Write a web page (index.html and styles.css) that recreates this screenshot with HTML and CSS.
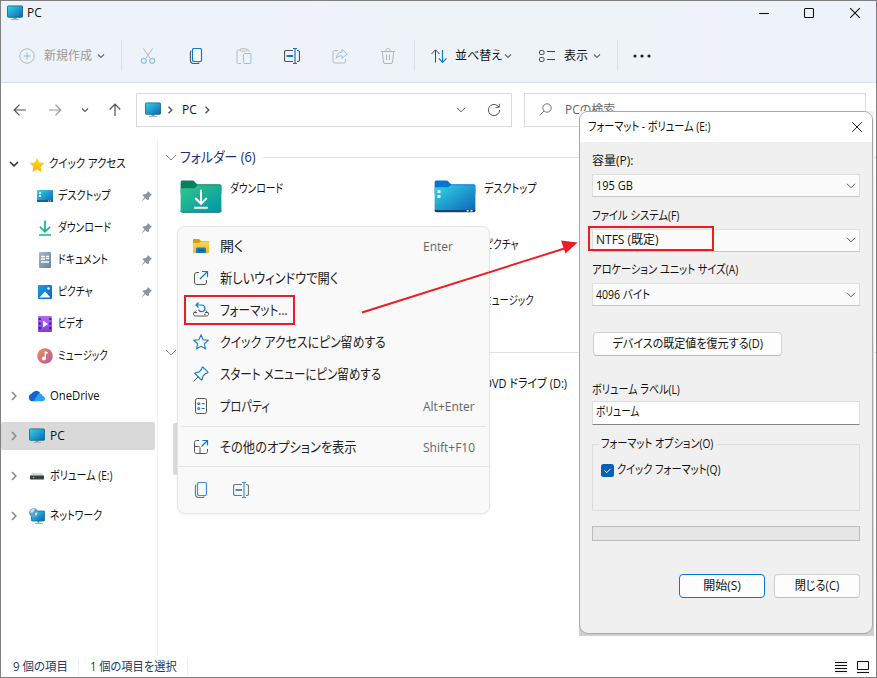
FILE: index.html
```html
<!DOCTYPE html>
<html lang="ja">
<head>
  <meta charset="UTF-8" />
  <meta name="viewport" content="width=device-width, initial-scale=1.0" />
  <title>PC</title>
  <link rel="stylesheet" href="styles.css">
</head>
<body>
  <!-- Shared icons -->
  <svg class="defs" width="0" height="0">
    <defs>
      <linearGradient id="g-screen" x1="0" y1="0" x2="1" y2="1"><stop offset="0" stop-color="#35d5e6"/><stop offset="1" stop-color="#0b62b8"/></linearGradient>
      <linearGradient id="g-green" x1="0" y1="0" x2="1" y2="1"><stop offset="0" stop-color="#33c787"/><stop offset="1" stop-color="#0095ab"/></linearGradient>
      <linearGradient id="g-doc" x1="0" y1="0" x2="1" y2="1"><stop offset="0" stop-color="#a5b8ce"/><stop offset="1" stop-color="#67809e"/></linearGradient>
      <linearGradient id="g-pic" x1="0" y1="0" x2="1" y2="1"><stop offset="0" stop-color="#18a2e8"/><stop offset="1" stop-color="#0a62bd"/></linearGradient>
      <linearGradient id="g-video" x1="0" y1="0" x2="0" y2="1"><stop offset="0" stop-color="#b36cf0"/><stop offset="1" stop-color="#7b3ddc"/></linearGradient>
      <linearGradient id="g-music" x1="0" y1="0" x2="1" y2="1"><stop offset="0" stop-color="#f29158"/><stop offset="1" stop-color="#b0579c"/></linearGradient>
      <linearGradient id="g-star" x1="0" y1="0" x2="0" y2="1"><stop offset="0" stop-color="#ffdc1f"/><stop offset="1" stop-color="#fbb400"/></linearGradient>
      <linearGradient id="g-folder" x1="0" y1="0" x2="0" y2="1"><stop offset="0" stop-color="#ffd85c"/><stop offset="1" stop-color="#f7b61c"/></linearGradient>
    </defs>
    <symbol id="pc" viewBox="0 0 16 16">
      <path d="M6.5 12h3v2.5h-3z" fill="#8d99a5"/>
      <path d="M4 14.5h8" stroke="#a9b3bc" stroke-width="1"/>
      <rect x=".5" y=".9" width="15" height="11.4" rx=".8" fill="url(#g-screen)" stroke="#14718f" stroke-width=".9"/>
    </symbol>
    <symbol id="down" viewBox="0 0 10 10"><path d="M2 3.5l3 3 3-3" fill="none" stroke="currentColor" stroke-width="1.1"/></symbol>
    <symbol id="copy" viewBox="0 0 16 16">
      <path d="M3.2 3C2.5 3.4 2.4 4 2.4 4.6v7.2c0 2 1 3.700 3 3.700h4.200c.8 0 1.300-.3 1.700-.8" fill="none" stroke="#555" stroke-width="1.1"/>
      <rect x="4.5" y=".5" width="9" height="13" rx="1.6" fill="#f8fbff" stroke="#0f78d0" stroke-width="1.2"/>
    </symbol>
    <symbol id="rename" viewBox="0 0 16 16">
      <path d="M9 2.5H2.3C1.200 2.500.5 3.300.5 4.300v7.400c0 1 .7 1.800 1.800 1.800H9M13 2.500h.8c1 0 1.700.8 1.700 1.800v7.400c0 1-.7 1.800-1.700 1.800H13" fill="none" stroke="#555" stroke-width="1.2"/>
      <path d="M11 .5v15M9 .5h4M9 15.500h4" fill="none" stroke="#0f78d0" stroke-width="1.2"/>
      <path d="M2.500 8H9" stroke="#0f78d0" stroke-width="2"/>
    </symbol>
    <symbol id="pin" viewBox="0 0 12 12">
      <path d="M7 1l4 4-1.200.6-1.700 1.800-.3 2.300-1.200.6-2.300-2.100L1.200 11l-.4-.3 2.600-3.200L1.700 5.300l.8-1L5 4l1.500-1.700z" fill="#8a97a3"/>
    </symbol>
  </svg>

  <div class="window">
    <header class="header">
      <div class="titlebar">
        <svg class="i16"><use href="#pc"/></svg>
        <span class="title">PC</span>
        <div class="controls">
          <svg width="12" height="12" viewBox="0 0 12 12"><path d="M1 6.5h10"/></svg>
          <svg width="12" height="12" viewBox="0 0 12 12"><rect x="1.5" y="1.5" width="9" height="9" rx="1"/></svg>
          <svg width="12" height="12" viewBox="0 0 12 12"><path d="M1.2 1.2l9.6 9.6M10.8 1.2L1.2 10.8"/></svg>
        </div>
      </div>

      <div class="toolbar">
        <div class="tool new off">
          <svg class="i16" viewBox="0 0 16 16"><circle cx="8" cy="8" r="7.2" fill="none" stroke="#b4b9be"/><path d="M8 4.5v7M4.5 8h7" stroke="#8abde6"/></svg>
          <span>新規作成</span>
          <svg class="i10"><use href="#down"/></svg>
        </div>
        <i class="bar"></i>
        <div class="tool-icons">
          <svg class="i16" viewBox="0 0 16 16" fill="none"><path d="M3.300.5l7.200 10.300M12.700.5L5.500 10.800" stroke="#b4b9be"/><circle cx="3.800" cy="12.800" r="2.500" stroke="#8fc3ec" stroke-width="1.200"/><circle cx="12.200" cy="12.800" r="2.500" stroke="#8fc3ec" stroke-width="1.200"/></svg>
          <svg class="i16"><use href="#copy"/></svg>
          <svg class="i16" viewBox="0 0 16 16" fill="none"><path d="M5 15.500H2.300c-1 0-1.300-.5-1.300-1.300V3.300C1 2.400 1.500 2 2.300 2H4m7 0h1c.9 0 1.300.5 1.300 1.300V4" stroke="#b4b9be"/><rect x="4.300" y=".7" width="6.400" height="2.400" rx="1" stroke="#b4b9be"/><rect x="7.500" y="5.500" width="7.500" height="10" rx="1" stroke="#8fc3ec"/></svg>
          <svg class="i16"><use href="#rename"/></svg>
          <svg class="i16" viewBox="0 0 16 16" fill="none"><path d="M6 2.500H3C1.800 2.500 1 3.300 1 4.500V13c0 1.200.8 2 2 2h8.500c1.200 0 2-.8 2-2v-2" stroke="#b4b9be"/><path d="M10 1.500L15.300 6 10 10.400V7.800c-2.700-.1-4.500.8-5.600 2.400C4.600 6.500 6.600 4.300 10 4z" stroke="#8fc3ec"/></svg>
          <svg class="i16" viewBox="0 0 16 16" fill="none" stroke="#b0b5ba"><path d="M1 3.500h14M5.700 3.300c0-3.700 4.600-3.700 4.600 0M2.300 3.500l1.200 10.600c.1.900.6 1.400 1.500 1.400h6c.9 0 1.400-.5 1.500-1.400l1.200-10.600M6.500 6.500v5.500M9.500 6.500v5.500"/></svg>
        </div>
        <i class="bar"></i>
        <div class="tool sort">
          <svg class="i16" viewBox="0 0 16 16" fill="none"><path d="M4.500 14.500V2M.5 6l4-4.200 4 4.200" stroke="#444"/><path d="M11.500 2v12.200M7.800 10.300l3.700 4 4-4" stroke="#0f78d0" stroke-width="1.200"/></svg>
          <span>並べ替え</span>
          <svg class="i10"><use href="#down"/></svg>
        </div>
        <div class="tool view">
          <svg class="i16" viewBox="0 0 16 16" fill="none" stroke="#444"><rect x=".5" y="2.500" width="4.500" height="4" rx="1.300"/><rect x=".5" y="9.500" width="4.500" height="4" rx="1.300"/><path d="M8 3.500h8M8 11.500h8"/></svg>
          <span>表示</span>
          <svg class="i10"><use href="#down"/></svg>
        </div>
        <i class="bar"></i>
        <svg class="more" width="18" height="4" viewBox="0 0 18 4" fill="#222"><circle cx="2" cy="2" r="1.600"/><circle cx="9" cy="2" r="1.600"/><circle cx="16" cy="2" r="1.600"/></svg>
      </div>
    </header>

    <div class="nav">
      <div class="arrows">
        <svg width="14" height="14" viewBox="0 0 14 14"><path d="M13 7H1.200M6.500 1.700L1.200 7l5.300 5.300"/></svg>
        <svg class="dim" width="14" height="14" viewBox="0 0 14 14"><path d="M1 7h11.800M7.500 1.700L12.800 7l-5.300 5.300"/></svg>
        <svg class="small" width="10" height="10"><use href="#down"/></svg>
        <svg width="14" height="14" viewBox="0 0 14 14"><path d="M7 13V1.200M1.700 6.500L7 1.200l5.300 5.300"/></svg>
      </div>
      <div class="address">
        <svg class="i16"><use href="#pc"/></svg>
        <svg class="crumb" width="6" height="8" viewBox="0 0 6 8"><path d="M1.500.8L4.800 4 1.500 7.200"/></svg>
        <span>PC</span>
        <svg class="crumb" width="6" height="8" viewBox="0 0 6 8"><path d="M1.500.8L4.800 4 1.500 7.200"/></svg>
        <svg class="drop" width="10" height="6" viewBox="0 0 10 6"><path d="M1 .8l4 4 4-4"/></svg>
        <svg class="reload" width="14" height="14" viewBox="0 0 14 14"><path d="M12.600 7A5.600 5.600 0 1 1 10.800 2.900L12 4M12.300.8v3.500H8.700"/></svg>
      </div>
      <div class="search">
        <svg width="13" height="13" viewBox="0 0 13 13"><circle cx="8" cy="5" r="4.200"/><path d="M5 8l-4.300 4.300"/></svg>
        <span>PCの検索</span>
      </div>
    </div>

    <div class="main">
      <nav class="sidebar">
        <div class="row top">
          <svg class="chev open" width="10" height="6" viewBox="0 0 10 6"><path d="M1 1l4 3.800L9 1"/></svg>
          <svg class="i16" viewBox="0 0 16 16"><path d="M8 .7l2.200 4.800 5.300.6-3.900 3.600 1 5.300L8 12.400 3.400 15l1-5.300L.5 6.100l5.300-.6z" fill="url(#g-star)"/></svg>
          <span class="s-quick">クイック アクセス</span>
        </div>
        <div class="row sub">
          <svg class="i16" viewBox="0 0 16 16"><rect y="2" width="16" height="12" rx=".8" fill="url(#g-screen)"/><path d="M2 5h2M2 8h2" stroke="#fff" stroke-width="1.500"/><path d="M0 13h16" stroke="#0d5686" stroke-width="1.500"/><path d="M11 13h3" stroke="#fff" stroke-dasharray="1 1"/></svg>
          <span class="s-desktop">デスクトップ</span>
          <svg class="pin"><use href="#pin"/></svg>
        </div>
        <div class="row sub">
          <svg class="i16" viewBox="0 0 16 16" fill="none" stroke="#15b48c" stroke-width="1.700"><path d="M8 .5v11M3 6.800l5 5 5-5M2 15h12"/></svg>
          <span class="s-download">ダウンロード</span>
          <svg class="pin"><use href="#pin"/></svg>
        </div>
        <div class="row sub">
          <svg class="i16" viewBox="0 0 16 16"><rect x="2" y="0" width="12" height="16" rx="1" fill="url(#g-doc)"/><path d="M4 4.500h4M4 7h4M9 4.500h3M9 6.500h3M4 10h8" stroke="#fff" stroke-width="1.300"/></svg>
          <span class="s-document">ドキュメント</span>
          <svg class="pin"><use href="#pin"/></svg>
        </div>
        <div class="row sub">
          <svg class="i16" viewBox="0 0 16 16"><rect x="1" y="1" width="14" height="14" rx="1" fill="url(#g-pic)"/><path d="M2.500 13.500L8 7.500l5.500 6z" fill="#fff"/><circle cx="11.500" cy="4.500" r="1.200" fill="#fff"/></svg>
          <span class="s-picture">ピクチャ</span>
          <svg class="pin"><use href="#pin"/></svg>
        </div>
        <div class="row sub">
          <svg class="i16" viewBox="0 0 16 16"><rect x="1" width="14" height="16" rx="1" fill="url(#g-video)"/><path d="M2.800 2v12M13.200 2v12" stroke="#3c1a80" stroke-width="1.800" stroke-dasharray="2 2.500"/><path d="M6 4.500l5 3.500-5 3.500z" fill="#fff"/></svg>
          <span class="s-video">ビデオ</span>
        </div>
        <div class="row sub">
          <svg class="i16" viewBox="0 0 16 16"><circle cx="8" cy="8" r="7.800" fill="url(#g-music)"/><path d="M8.300 10.500V3.500c.4 1.200 1.700 1.500 2.500 1.500" fill="none" stroke="#fff" stroke-width="1.400"/><circle cx="6.900" cy="10.600" r="2" fill="#fff"/></svg>
          <span class="s-music">ミュージック</span>
        </div>
        <div class="row group first">
          <svg class="chev" width="6" height="10" viewBox="0 0 6 10"><path d="M1 1l3.800 4L1 9"/></svg>
          <svg class="i16" viewBox="0 0 16 16"><path d="M4 13.200A3.800 3.800 0 0 1 2.500 5.800 5.200 5.200 0 0 1 11 4.500l-4 8.700z" fill="#1464cf"/><path d="M4.500 13.300l4.200-6.500c1.300-1.900 4.500-1.500 4.800 1 3.400.8 3.200 5.500-.4 5.500z" fill="#28a4f2"/></svg>
          <span class="s-one">OneDrive</span>
        </div>
        <div class="row group">
          <div class="selected">
            <svg class="chev" width="6" height="10" viewBox="0 0 6 10"><path d="M1 1l3.800 4L1 9"/></svg>
            <svg class="i16"><use href="#pc"/></svg>
            <span>PC</span>
          </div>
        </div>
        <div class="row group">
          <svg class="chev" width="6" height="10" viewBox="0 0 6 10"><path d="M1 1l3.800 4L1 9"/></svg>
          <svg class="i16" viewBox="0 0 16 16"><path d="M3 5h10l2 3H1z" fill="#d5d8db"/><rect x="1" y="7.500" width="14" height="4" rx=".6" fill="#3c3f42"/><circle cx="4.500" cy="9.500" r=".8" fill="#4be070"/></svg>
          <span class="s-volume">ボリューム (E:)</span>
        </div>
        <div class="row group">
          <svg class="chev" width="6" height="10" viewBox="0 0 6 10"><path d="M1 1l3.800 4L1 9"/></svg>
          <svg class="i16" viewBox="0 0 16 16"><path d="M8.500 12h2v3h-2z" fill="#8d99a5"/><path d="M6 15.500h8" stroke="#a9b3bc"/><rect x="2.500" y="3" width="13" height="10" rx=".6" fill="url(#g-screen)" stroke="#14718f" stroke-width=".8"/><circle cx="4.600" cy="4.800" r="4.500" fill="#5d9fc7"/><path d="M1.500 2.500c1.500-1.500 3-1.700 4.500-1.200L4 4.500 1.500 5zM6 5l2.500-.5c0 1.500-.7 2.800-2 3.500z" fill="#cfe3ee"/></svg>
          <span class="s-network">ネットワーク</span>
        </div>
      </nav>

      <section class="content">
        <div class="heading">
          <svg width="12" height="7" viewBox="0 0 12 7"><path d="M1 1l5 5 5-5"/></svg>
          <span>フォルダー (6)</span>
          <i></i>
        </div>
        <div class="folders">
          <div class="folder">
            <svg width="42" height="33" viewBox="0 0 42 34"><path d="M0 8V2.500C0 1 .8.500 2 .500h11l4 4h23c1.500 0 2 .8 2 2V14H0z" fill="#0a7f60"/><path d="M0 8.500h14.500L17.500 5.500H42v25.500c0 1.500-.8 2-2 2H2c-1.200 0-2-.7-2-2z" fill="url(#g-green)"/><path d="M0 31.500c0 1.200 1 1.800 2 1.800h38c1 0 2-.6 2-1.800" fill="none" stroke="#087070"/><path d="M21 10v14M15 18.500l6 6 6-6M14 28.500h14" fill="none" stroke="#fff" stroke-width="2"/></svg>
            <span class="s-download">ダウンロード</span>
          </div>
          <div class="folder">
            <svg width="42" height="33" viewBox="0 0 42 34"><path d="M0 8V2.500C0 1 .8.500 2 .500h11l4 4h23c1.500 0 2 .8 2 2V14H0z" fill="#0874cf"/><path d="M0 7.500h13.500L17 5.500H42V31c0 1.500-.8 2-2 2H2c-1.200 0-2-.7-2-2z" fill="url(#g-screen)"/><path d="M0 31h42c0 1.500-.8 2.300-2 2.300H2C.8 33.300 0 32.500 0 31z" fill="#124666"/><path d="M3 10.500h3v3H3zM3 15.500h3v3H3zM33 31h2v1.500h-2zM37 31h2v1.500h-2z" fill="#fff"/></svg>
            <span class="s-desktop">デスクトップ</span>
          </div>
          <div class="folder"></div>
          <div class="folder plain"><span class="s-picture">ピクチャ</span></div>
          <div class="folder"></div>
          <div class="folder plain"><span class="s-music">ミュージック</span></div>
        </div>
        <div class="heading drives">
          <svg width="12" height="7" viewBox="0 0 12 7"><path d="M1 1l5 5 5-5"/></svg>
          <i></i>
        </div>
        <div class="dvd"><span class="s-dvd">DVD ドライブ (D:)</span></div>
        <div class="tile"></div>
      </section>
    </div>

    <footer class="status">
      <div class="count"><span class="s-count">9 個の項目</span></div>
      <div class="picked"><span class="s-select">1 個の項目を選択</span></div>
      <div class="modes">
        <svg width="14" height="14" viewBox="0 0 14 14"><path d="M1 2.500h12M1 5.500h12M1 8.500h12M1 11.500h12"/></svg>
        <svg width="14" height="14" viewBox="0 0 14 14"><path d="M1.500 1.500h11v8h-11zM1 12.500h12"/></svg>
      </div>
    </footer>

    <!-- Context menu -->
    <div class="menu">
      <div class="item">
        <svg class="i16" viewBox="0 0 16 16"><path d="M0 5V2c0-.6.4-1 1-1h5l2 2h7c.6 0 1 .4 1 1v3H0z" fill="#dc9a0c"/><path d="M0 5h6l2-1.500h8V14c0 .6-.4 1-1 1H1c-.6 0-1-.4-1-1z" fill="url(#g-folder)"/><path d="M3 15v-4c0-.8.6-1.500 1.500-1.500h7c.9 0 1.500.7 1.500 1.500v4z" fill="#1478c8"/><path d="M5.500 12.300h5" stroke="#0b4b88" stroke-width="1.200"/></svg>
        <span>開く</span><kbd>Enter</kbd>
      </div>
      <div class="item">
        <svg class="i16" viewBox="0 0 16 16" fill="none"><path d="M6 2.500H4c-1.700 0-2.500 1-2.500 2.500v7c0 1.700 1 2.500 2.500 2.500h7c1.700 0 2.500-1 2.500-2.500v-2" stroke="#555"/><path d="M7 9l7.500-7.500M9 1.500h5.500V7" stroke="#0f78d0" stroke-width="1.200"/></svg>
        <span class="m-new">新しいウィンドウで開く</span>
      </div>
      <div class="item">
        <svg class="i16" viewBox="0 0 16 16" fill="none"><path d="M3.500 8.500L1.500 10c-.7.600-1 1.200-1 2 0 1.300.8 2 2 2h11c1.200 0 2-.7 2-2 0-.8-.3-1.400-1-2l-2-1.500M1 10.500h3M12 10.500h3M11 12.300h1.500" stroke="#555"/><path d="M5.500.5L3 3l2.500 2.500M3 3h5.500a3.300 3.300 0 1 1-3 4.500" stroke="#0f78d0" stroke-width="1.200"/></svg>
        <span class="m-format">フォーマット...</span>
      </div>
      <div class="item">
        <svg class="i16" viewBox="0 0 16 16"><path d="M8 1l2.100 4.700 5.100.6-3.800 3.500 1 5L8 12.300 3.600 14.800l1-5L.8 6.300l5.100-.6z" fill="none" stroke="#0f78d0" stroke-width="1.100"/></svg>
        <span class="m-quick">クイック アクセスにピン留めする</span>
      </div>
      <div class="item">
        <svg class="i16" viewBox="0 0 16 16" fill="none"><path d="M5.300 10.700L.5 15.500" stroke="#555"/><path d="M9.800 1l5.200 5.200-1 1-1.500.3-2.500 2.500-.7 3.200-1 .8-6.500-6.500 1-.9L6 6l2.500-2.500.2-1.500z" stroke="#0f78d0" stroke-width="1.100"/></svg>
        <span class="m-start">スタート メニューにピン留めする</span>
      </div>
      <div class="item">
        <svg class="i16" viewBox="0 0 16 16" fill="none"><rect x="2.500" y=".5" width="11" height="15" rx="1.800" stroke="#555"/><path d="M4.700 5h2v1.500h-2zM4.700 9.800h2v1.500h-2zM8.700 5.700h3M8.700 10.500h3" stroke="#0f78d0"/></svg>
        <span class="m-prop">プロパティ</span><kbd>Alt+Enter</kbd>
      </div>
      <div class="line"></div>
      <div class="item">
        <svg class="i16" viewBox="0 0 16 16" fill="none"><path d="M6 1.500H3.500c-1.200 0-2 .8-2 2v9c0 1.200.8 2 2 2h9c1.200 0 2-.8 2-2V10M1.500 7.500h4c1 0 1.500.5 1.500 1.500v5.500" stroke="#555"/><path d="M8.500 7.500l6-6M9.500 1.500h5v5" stroke="#0f78d0" stroke-width="1.200"/></svg>
        <span class="m-other">その他のオプションを表示</span><kbd>Shift+F10</kbd>
      </div>
      <div class="line full"></div>
      <div class="quick">
        <svg class="i16"><use href="#copy"/></svg>
        <svg class="i16"><use href="#rename"/></svg>
      </div>
    </div>

    <!-- Format dialog -->
    <div class="backdrop">
      <div class="dialog">
        <div class="dialog-title">
          <span class="d-title">フォーマット - ボリューム (E:)</span>
          <svg width="12" height="12" viewBox="0 0 12 12"><path d="M1.200 1.200l9.600 9.600M10.800 1.200L1.200 10.800"/></svg>
        </div>
        <div class="dialog-body">
          <label><span>容量(P):</span></label>
          <div class="select"><span class="d-195">195 GB</span><svg width="10" height="6" viewBox="0 0 10 6"><path d="M1 .8l4 4 4-4"/></svg></div>
          <label><span class="d-fs">ファイル システム(F)</span></label>
          <div class="select"><span>NTFS (既定)</span><svg width="10" height="6" viewBox="0 0 10 6"><path d="M1 .8l4 4 4-4"/></svg></div>
          <label><span class="d-alloc">アロケーション ユニット サイズ(A)</span></label>
          <div class="select"><span class="d-4096">4096 バイト</span><svg width="10" height="6" viewBox="0 0 10 6"><path d="M1 .8l4 4 4-4"/></svg></div>
          <button class="restore"><span class="d-restore">デバイスの既定値を復元する(D)</span></button>
          <label><span class="d-label">ボリューム ラベル(L)</span></label>
          <div class="field"><span class="d-vol">ボリューム</span></div>
          <fieldset>
            <legend><span class="d-opt">フォーマット オプション(O)</span></legend>
            <div class="check">
              <svg width="13" height="13" viewBox="0 0 13 13"><rect width="13" height="13" rx="2.500" fill="#0560b6"/><path d="M3.500 6.500l2.200 2.200 4-4" fill="none" stroke="#fff"/></svg>
              <span class="d-quick">クイック フォーマット(Q)</span>
            </div>
          </fieldset>
          <div class="progress"></div>
          <div class="buttons">
            <button class="primary"><span>開始(S)</span></button>
            <button><span class="d-close">閉じる(C)</span></button>
          </div>
        </div>
      </div>
    </div>

    <!-- Step marks -->
    <div class="mark mark-format"></div>
    <div class="mark mark-ntfs"></div>
    <svg class="arrow" width="220" height="80" viewBox="0 0 220 80"><path d="M2 75.500L206 11" stroke="#ed1c24" stroke-width="1.900"/><path d="M217.500 5.500L201 3.500l4.500 13z" fill="#ed1c24"/></svg>
  </div>
</body>
</html>
```

FILE: styles.css
```css
body {
  margin: 0;
  font-family: "Open Sans", "Noto Sans CJK JP", sans-serif;
  font-size: 12px;
  line-height: 16px;
  color: #111;
  font-feature-settings: "palt";
}

* {
  box-sizing: border-box;
}

svg {
  display: block;
  flex: none;
}

span {
  display: inline-block;
  white-space: nowrap;
  transform-origin: 0 50%;
}

.defs {
  position: absolute;
}

.i16 {
  width: 16px;
  height: 16px;
}

.i10 {
  width: 10px;
  height: 10px;
}

.window {
  position: relative;
  display: flex;
  flex-direction: column;
  width: 877px;
  height: 678px;
  border: 1px solid #7f7f7f;
  background: #fff;
  overflow: hidden;
}

.s-quick { transform: scaleX(.87); }
.s-desktop { transform: scaleX(.84); }
.s-download { transform: scaleX(.81); }
.s-document { transform: scaleX(.815); }
.s-picture { transform: scaleX(.81); }
.s-video { transform: scaleX(.76); }
.s-music { transform: scaleX(.78); }
.s-one { transform: scaleX(.94); }
.s-volume { transform: scaleX(.84); }
.s-network { transform: scaleX(.82); }
.s-dvd { transform: scaleX(.915); }
.s-count { transform: scaleX(.955); }
.s-select { transform: scaleX(.935); }
.m-new { transform: scaleX(.875); }
.m-format { transform: scaleX(.825); }
.m-quick { transform: scaleX(.85); }
.m-start { transform: scaleX(.822); }
.m-prop { transform: scaleX(.8); }
.m-other { transform: scaleX(.875); }
.d-title { transform: scaleX(.845); }
.d-195 { transform: scaleX(.92); }
.d-fs { transform: scaleX(.86); }
.d-alloc { transform: scaleX(.853); }
.d-4096 { transform: scaleX(.88); }
.d-restore { transform: scaleX(.92); transform-origin: 50% 50%; }
.d-label { transform: scaleX(.84); }
.d-vol { transform: scaleX(.8); }
.d-opt { transform: scaleX(.845); }
.d-quick { transform: scaleX(.85); }
.d-close { transform: scaleX(.93); transform-origin: 50% 50%; }

/* Title bar and toolbar */
.header {
  height: 82px;
  background: linear-gradient(90deg, #eef2fb, #eef3f8 45%, #eef3f8 75%, #eef2fb);
  border-bottom: 1px solid #dcdfe5;
}

.titlebar {
  display: flex;
  align-items: center;
  height: 24px;
  padding-left: 6px;
}

.title {
  margin-left: 4px;
}

.controls {
  display: flex;
  gap: 33px;
  margin-left: auto;
  margin-right: 15px;
}

.controls svg {
  fill: none;
  stroke: #111;
  stroke-width: 1.1;
}

.controls svg:nth-child(3) {
  margin-left: 1px;
}

.toolbar {
  display: flex;
  align-items: center;
  height: 60px;
  padding-top: 1px;
}

.tool {
  display: flex;
  align-items: center;
}

.tool .i10 {
  color: #666;
}

.tool span {
  padding-top: 1px;
}

.new {
  width: 120px;
  padding-left: 18px;
}

.new span {
  width: 48px;
  margin: 0 4px 0 9px;
}

.off {
  color: #999;
}

.bar {
  width: 1px;
  height: 31px;
  background: #dbe0e6;
}

.tool-icons {
  display: flex;
  gap: 32px;
  width: 292px;
  padding-left: 18px;
}

.sort {
  width: 109px;
  padding-left: 16px;
}

.sort span {
  width: 43px;
  margin: 0 5px 0 8px;
}

.view {
  width: 93px;
  padding-left: 15px;
}

.view span {
  width: 24px;
  margin: 0 4px 0 9px;
}

.more {
  margin-left: 15px;
}

/* Address row */
.nav {
  display: flex;
  align-items: center;
  height: 55px;
  padding-bottom: 2px;
}

.arrows {
  display: flex;
  align-items: center;
  width: 135px;
  padding-left: 12px;
}

.arrows svg {
  fill: none;
  stroke: #555;
  stroke-width: 1.2;
}

.arrows .dim {
  margin-left: 21px;
  stroke: #999;
}

.arrows .small {
  margin: 0 18px 0 18px;
  color: #555;
}

.address {
  display: flex;
  align-items: center;
  width: 376px;
  height: 34px;
  padding: 0 10px 0 8px;
  border: 1px solid #d9d9d9;
}

.address svg {
  fill: none;
  stroke: #555;
}

.address .i16 {
  stroke: none;
}

.address span {
  margin: 0 7px 0 9px;
}

.address .crumb {
  margin-left: 6px;
  stroke-width: 1.4;
}

.address span + .crumb {
  margin-left: 0;
}

.address .drop {
  margin-left: auto;
}

.address .reload {
  margin-left: 21px;
}

.search {
  display: flex;
  align-items: center;
  width: 342px;
  height: 34px;
  margin-left: 12px;
  padding-left: 14px;
  border: 1px solid #d9d9d9;
  color: #666;
}

.search svg {
  fill: none;
  stroke: #777;
}

.search span {
  margin-left: 13px;
}

/* Sidebar */
.main {
  display: flex;
  height: 518px;
}

.sidebar {
  width: 157px;
  padding-top: 10px;
  border-right: 1px solid #f2f2f2;
}

.row {
  display: flex;
  align-items: center;
  height: 32px;
}

.top {
  padding-left: 8px;
}

.top .i16 {
  margin: 1px 4px 0 10px;
}

.sub {
  padding-left: 36px;
}

.sub span {
  margin-left: 5px;
}

.chev {
  fill: none;
  stroke: #8a8a8a;
  stroke-width: 1.6;
}

.chev.open {
  stroke: #333;
}

.pin {
  width: 12px;
  height: 12px;
  margin-left: auto;
  margin-right: 4px;
}

.group {
  height: 40px;
  padding-left: 10px;
}

.first {
  margin-top: 4px;
}

.group .i16 {
  margin: 0 5px 0 12px;
}

.selected {
  display: flex;
  align-items: center;
  width: 154px;
  height: 28px;
  margin-left: -10px;
  padding-left: 10px;
  border-radius: 2px;
  background: #d9d9d9;
}

/* Folder list */
.content {
  flex: 1;
  padding: 10px 0 0 7px;
}

.heading {
  display: flex;
  align-items: center;
  height: 18px;
  font-size: 14px;
  color: #1d2f7c;
}

.heading svg {
  fill: none;
  stroke: #8a8a8a;
}

.heading span {
  width: 76px;
  margin: 0 7px 0 3px;
  transform: scaleX(.92);
}

.heading i {
  flex: 1;
  height: 1px;
  background: #e2e2e2;
}

.folders {
  display: grid;
  grid-template-columns: 254px 254px;
  grid-auto-rows: 56px;
  padding: 14px 0 0 15px;
}

.folder {
  display: flex;
}

.folder span {
  margin: 1px 0 0 8px;
}

.folder.plain {
  padding-left: 42px;
}

.drives {
  margin-top: -5px;
}

.drives i {
  margin-left: 100px;
}

.dvd {
  height: 62px;
  padding: 15px 0 0 319px;
}

.tile {
  width: 200px;
  height: 52px;
  margin-left: 8px;
  background: #d9d9d9;
  border-radius: 2px;
}

/* Status bar */
.status {
  display: flex;
  align-items: center;
  height: 21px;
  padding: 1px 0 0 12px;
  color: #233a63;
}

.count,
.picked {
  height: 16px;
  border-right: 1px solid #eee;
}

.count {
  width: 66px;
}

.picked {
  width: 109px;
  padding-left: 11px;
}

.modes {
  display: flex;
  gap: 8px;
  margin-left: auto;
  margin-right: 6px;
}

.modes svg {
  fill: none;
  stroke: #111;
  background: #f5f5f5;
}

/* Context menu */
.menu {
  position: absolute;
  left: 176px;
  top: 225px;
  width: 313px;
  height: 288px;
  padding-top: 3px;
  border: 1px solid #e5e5e5;
  border-radius: 8px;
  background: #f9f9f9;
  box-shadow: 0 1px 3px rgba(0, 0, 0, .05);
}

.item {
  display: flex;
  align-items: center;
  height: 32px;
  padding: 0 15px;
  font-size: 14px;
  color: #222;
}

.item span {
  margin: 0 0 1px 11px;
}

kbd {
  width: 51px;
  margin-left: auto;
  padding-top: 1px;
  font-family: "Open Sans", sans-serif;
  font-size: 12px;
  color: #666;
  white-space: nowrap;
}

.line {
  height: 1px;
  margin: 4px 3px;
  background: #e5e5e5;
}

.line.full {
  margin: 3px 0 0;
}

.quick {
  display: flex;
  gap: 24px;
  padding: 15px 15px 0;
  opacity: .8;
}

/* Format dialog */
.backdrop {
  position: absolute;
  left: 578px;
  top: 110px;
  width: 295px;
  height: 525px;
  background: linear-gradient(#f2f2f2, #cfcfcf);
}

.dialog {
  width: 294px;
  height: 523px;
  border: 1px solid #a6a6a6;
  border-radius: 9px;
  background: #f0f0f0;
  overflow: hidden;
}

.dialog-title {
  display: flex;
  align-items: center;
  justify-content: space-between;
  height: 30px;
  padding: 0 9px 0 8px;
  background: #fff;
}

.dialog-title svg,
.select svg {
  fill: none;
  stroke: #222;
}

.dialog-title svg {
  margin-bottom: 1px;
}

.select svg {
  stroke: #555;
}

.dialog-body {
  padding: 11px 12px 0;
}

label {
  display: block;
  height: 16px;
}

.select {
  display: flex;
  align-items: center;
  justify-content: space-between;
  height: 23px;
  margin: 5px 0 10.5px;
  padding: 0 3px;
  border: 1px solid #dedede;
  border-bottom-color: #c6c6c6;
  background: #fbfbfb;
}

button {
  height: 24px;
  padding: 0;
  border: 1px solid #cfcfcf;
  border-bottom-color: #bcbcbc;
  border-radius: 4px;
  background: #fdfdfd;
  font: inherit;
  color: #111;
}

.restore {
  display: block;
  width: 189px;
  margin: 26px 0 26px 1px;
}

.field {
  height: 24px;
  margin-top: 3px;
  padding: 2px 3px;
  border: 1px solid #dedede;
  border-bottom-color: #858585;
  background: #fff;
}

fieldset {
  height: 75px;
  margin: 11px 0 0;
  padding: 0 8px;
  border: 1px solid #dcdcdc;
}

legend {
  width: 118px;
  height: 16px;
  margin-left: -2px;
  padding-left: 2px;
}

.check {
  display: flex;
  align-items: center;
  gap: 3px;
  margin-top: 10px;
}

.progress {
  height: 15px;
  margin-top: 15px;
  border: 1px solid #bcbcbc;
  background: #e6e6e6;
}

.buttons {
  display: flex;
  justify-content: flex-end;
  gap: 9px;
  margin-top: 33px;
}

.buttons button {
  width: 86px;
}

.buttons .primary {
  border-color: #0078d4;
}

/* Step marks */
.mark {
  position: absolute;
  border: 2px solid #ed1c24;
}

.mark-format {
  left: 183px;
  top: 294px;
  width: 111px;
  height: 30px;
}

.mark-ntfs {
  left: 587px;
  top: 225px;
  width: 126px;
  height: 25px;
}

.arrow {
  position: absolute;
  left: 359px;
  top: 236px;
  fill: none;
}
```
